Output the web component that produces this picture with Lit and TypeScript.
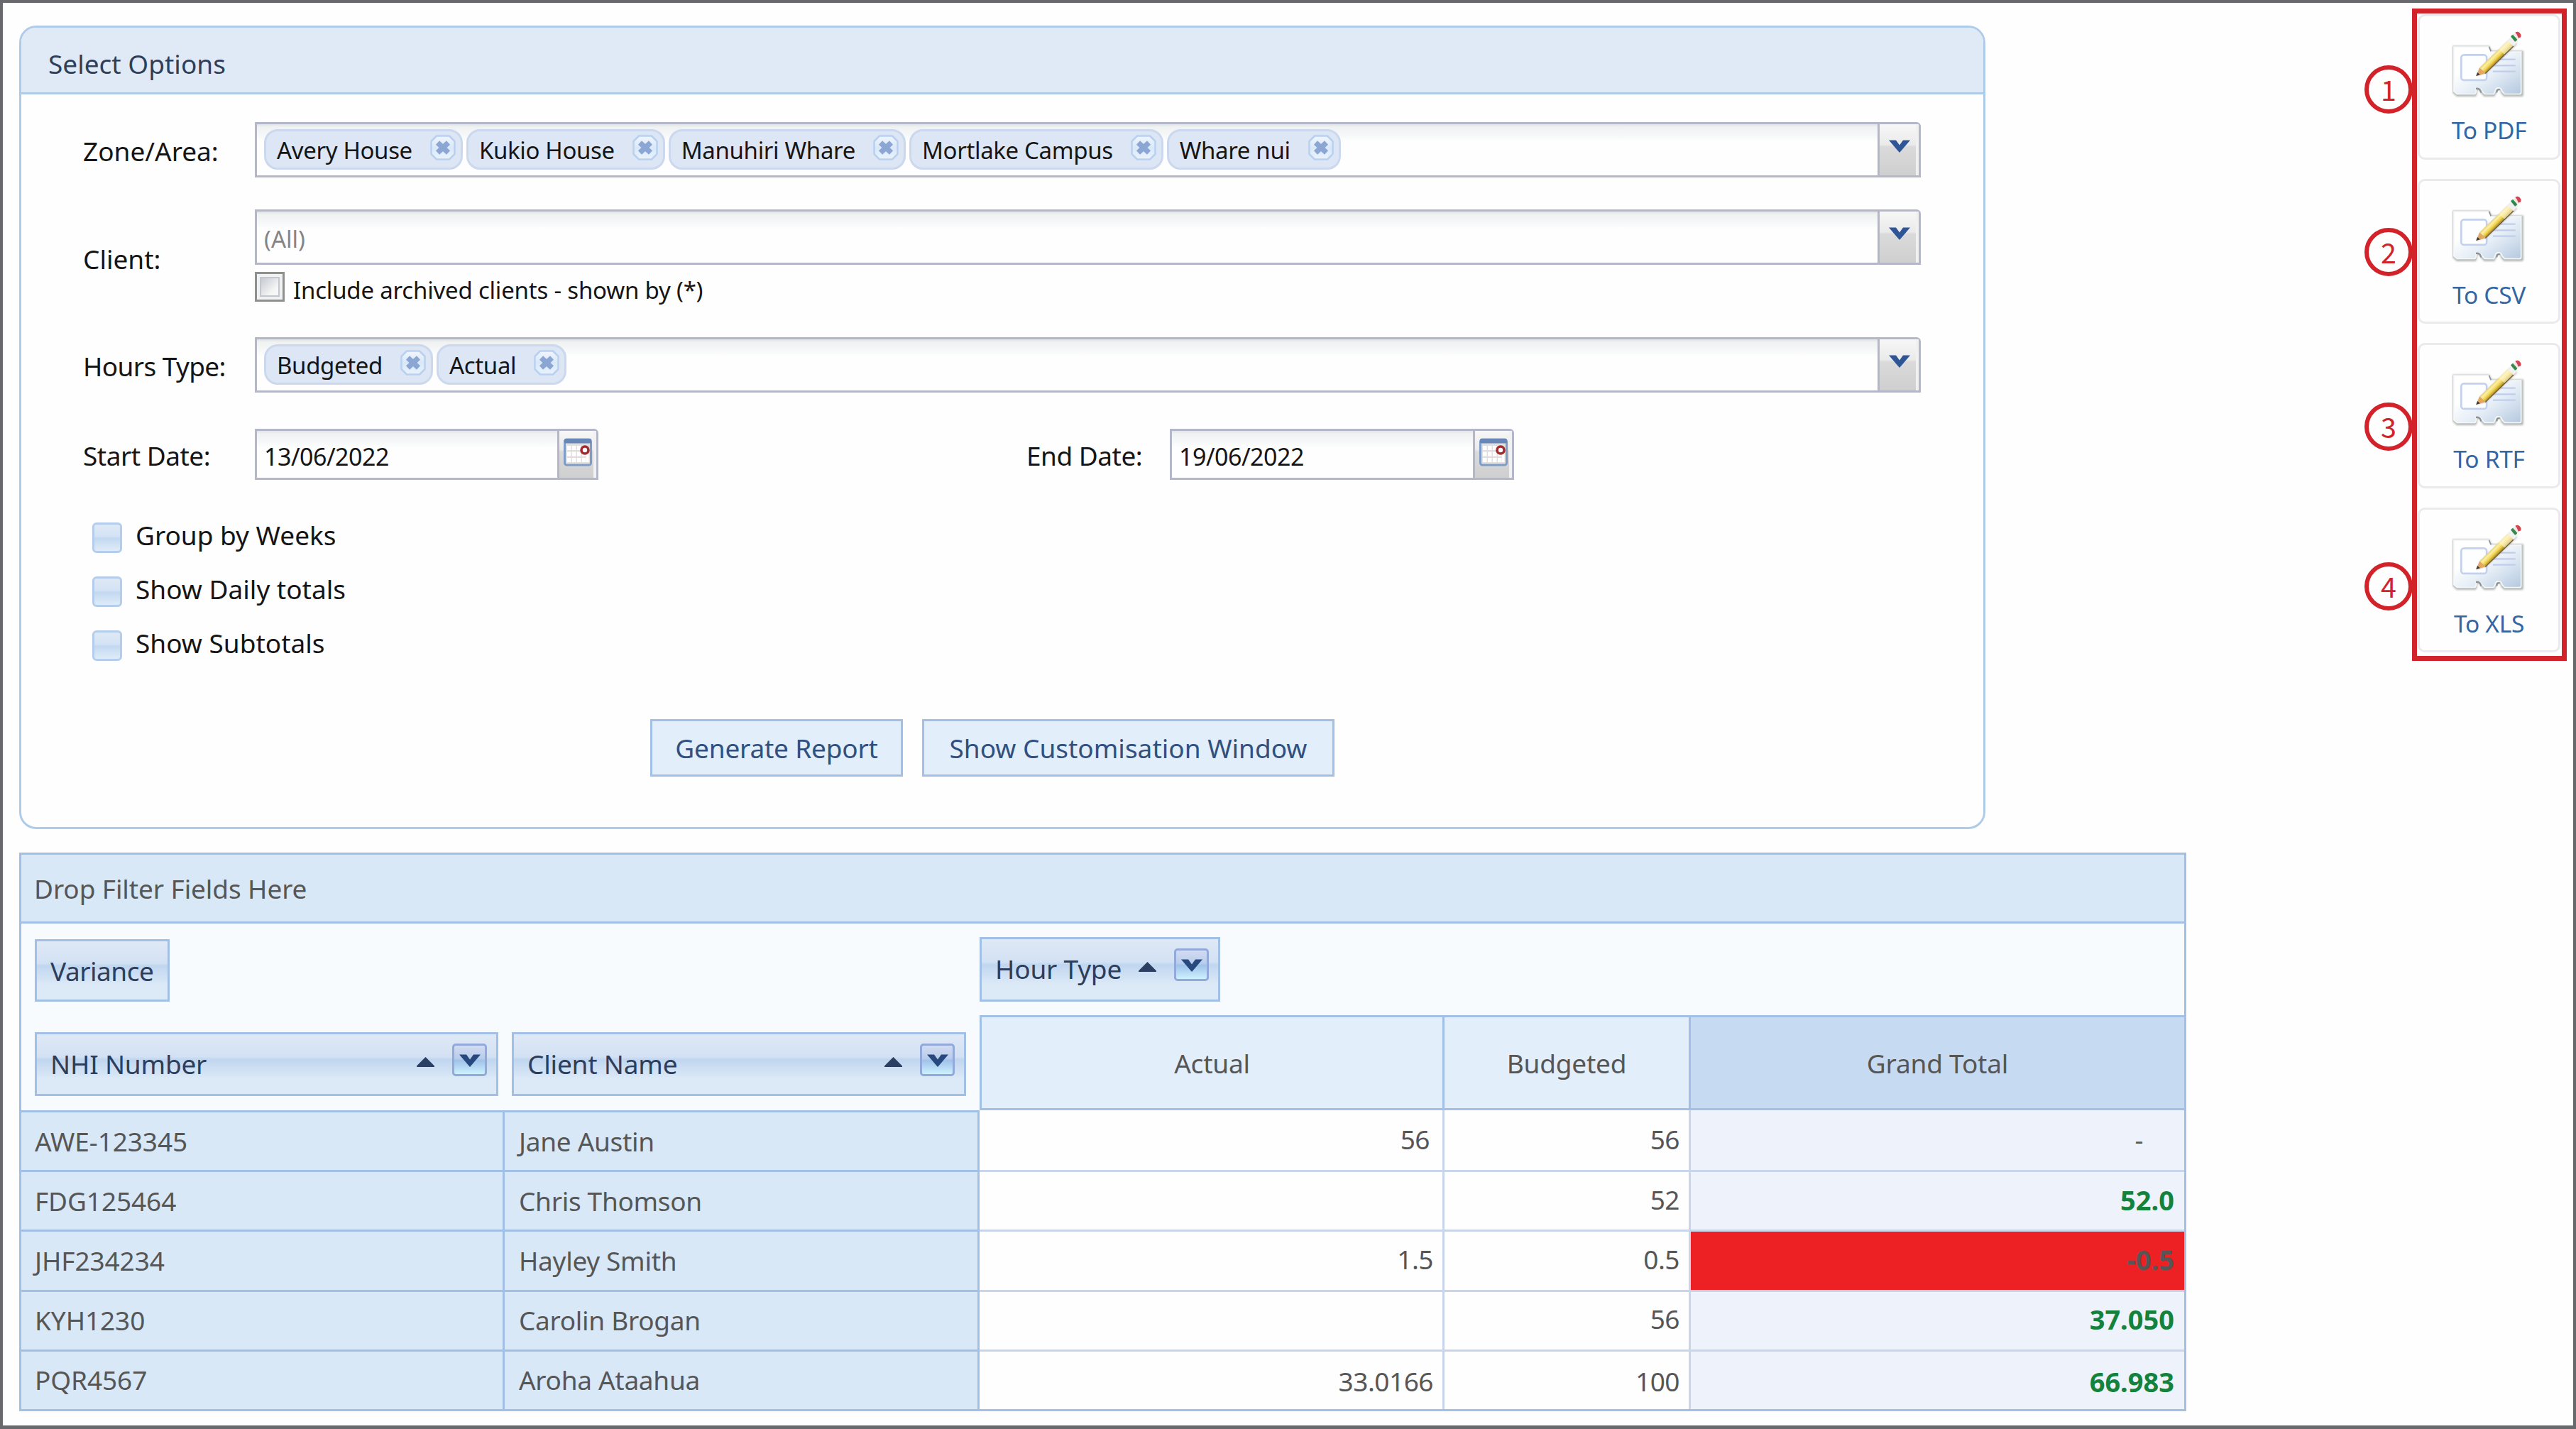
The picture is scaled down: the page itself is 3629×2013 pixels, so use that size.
import { LitElement, html, css, svg, nothing } from "lit";
import { customElement } from "lit/decorators.js";
import { classMap } from "lit/directives/class-map.js";

const chevron = html`<svg class="chev" viewBox="0 0 30 18" width="30" height="18">
  <path d="M0 0.5H10L15 7.5L20 0.5H30L18.5 14L15 18L11.5 14Z" fill="currentColor" />
</svg>`;

const closeIcon = html`<svg class="close" viewBox="0 0 36 36" width="36" height="36">
  <defs>
    <linearGradient id="cg" x1="0" y1="0" x2="0" y2="1">
      <stop offset="0" stop-color="#f1f6fd" /><stop offset="0.5" stop-color="#d9e8f8" />
      <stop offset="1" stop-color="#e9f3fc" />
    </linearGradient>
  </defs>
  <path d="M9 1.5H27L34.500 9V27L27 34.500H9L1.500 27V9Z" fill="url(#cg)" stroke="#b9d1ef" stroke-width="2.500" stroke-linejoin="round" />
  <path d="M10.500 11L25.500 25M25.500 11L10.500 25" stroke="#8ba6d3" stroke-width="7.500" />
</svg>`;

const calendarIcon = html`<svg class="cal" viewBox="0 0 40 40" width="40" height="40">
  <rect x="1.500" y="2" width="37" height="36" rx="3" fill="#e2e0de" stroke="#7d9cc8" stroke-width="3" />
  <rect x="1" y="1" width="38" height="6.500" rx="2" fill="#6787b8" />
  <g fill="#ffffff">
    ${[10, 18.5, 27].flatMap((y) => [5, 12, 19, 26].map((x) => svg`<rect x=${x} y=${y + 1} width="5.500" height="6" />`))}
    <rect x="32" y="19" width="3.500" height="15" />
  </g>
  <circle cx="30" cy="17" r="5" fill="#ffffff" stroke="#a32a2e" stroke-width="3.600" />
</svg>`;

const sortUp = html`<svg class="sort" viewBox="0 0 25 14" width="25" height="14">
  <path d="M12.500 0L25 12.500V14H0V12.500Z" fill="#2b3f63" />
</svg>`;

const cardIcon = html`<svg class="pic" viewBox="40 25 310 285" width="103" height="95">
  <defs>
    <linearGradient id="card" x1="0" y1="0" x2="1" y2="1">
      <stop offset="0.3" stop-color="#ffffff" /><stop offset="0.6" stop-color="#e4edf6" />
      <stop offset="1" stop-color="#b4c8df" />
    </linearGradient>
    <linearGradient id="wood" gradientUnits="userSpaceOnUse" x1="218" y1="124" x2="243" y2="149">
      <stop offset="0" stop-color="#e9d27c" /><stop offset="0.25" stop-color="#fdf0a4" />
      <stop offset="0.6" stop-color="#f0d14c" /><stop offset="1" stop-color="#9c7a22" />
    </linearGradient>
    <filter id="soft" x="-10%" y="-10%" width="120%" height="120%"><feGaussianBlur stdDeviation="3" /></filter>
  </defs>
  <path d="M46 92H198L208 112H342V296Q342 303 334 303H262L250 290Q248 274 238 274Q228 274 228 288L220 303H178L166 290Q160 272 144 276Q150 290 140 303H62L46 288Z"
    fill="#b4bab8" stroke="#c0c5c2" stroke-width="5" filter="url(#soft)" />
  <path d="M49 94H196L206 115H334V288Q334 294 326 294H264L253 282Q250 268 238 268Q225 268 224 282L218 294H180L168 282Q162 266 140 268Q148 282 138 294H62L49 282Z"
    fill="url(#card)" stroke="#f6f8f8" stroke-width="5" />
  <path d="M198 93L206 113" stroke="#8d9496" stroke-width="5" fill="none" />
  <path d="M142 271Q162 268 164 288" stroke="#8c9394" stroke-width="7" fill="none" />
  <path d="M231 288Q229 274 244 274" stroke="#8c9394" stroke-width="7" fill="none" />
  <rect x="80" y="128" width="108" height="107" rx="12" fill="#fdfeff" stroke="#c4d1ec" stroke-width="8" />
  <path d="M226 147H310M214 173H310M214 198H310" stroke="#c0cdeb" stroke-width="7" />
  <path d="M144 218L160 184L292 56L318 82L186 206Z" fill="#75706a" opacity="0.400" filter="url(#soft)" />
  <path d="M143 217L158 182L184 206Z" fill="#e2a862" />
  <path d="M143 217L149 202L160 212Z" fill="#3c3a3c" />
  <path d="M158 182L278 66L302 90L184 206Z" fill="url(#wood)" />
  <path d="M240 103L278 66L302 90L264 127Z" fill="#fdf6d8" opacity="0.600" />
  <path d="M182 207L302 91" stroke="#6b5c38" stroke-width="4" />
  <path d="M276 68L296 48L322 71L302 91Z" fill="#f1f1f1" />
  <path d="M290 50Q296 40 303 42L318 64Q316 68 308 72Z" fill="#2f8a4c" />
  <path d="M300 44L310 34L330 53L320 64Z" fill="#f5e6e7" />
  <path d="M309 33Q318 26 328 34Q338 44 331 54L322 56L316 42Z" fill="#d24450" />
</svg>`;

interface Row { nhi: string; name: string; actual: string; budgeted: string; total: string; tone?: string }

const ROWS: Row[] = [
  { nhi: "AWE-123345", name: "Jane Austin", actual: "56", budgeted: "56", total: "-", tone: "dash" },
  { nhi: "FDG125464", name: "Chris Thomson", actual: "", budgeted: "52", total: "52.0", tone: "good" },
  { nhi: "JHF234234", name: "Hayley Smith", actual: "1.5", budgeted: "0.5", total: "-0.5", tone: "bad" },
  { nhi: "KYH1230", name: "Carolin Brogan", actual: "", budgeted: "56", total: "37.050", tone: "good" },
  { nhi: "PQR4567", name: "Aroha Ataahua", actual: "33.0166", budgeted: "100", total: "66.983", tone: "good" },
];

const ZONES = ["Avery House", "Kukio House", "Manuhiri Whare", "Mortlake Campus", "Whare nui"];
const HOURS = ["Budgeted", "Actual"];
const CHECKS = ["Group by Weeks", "Show Daily totals", "Show Subtotals"];
const EXPORTS = ["To PDF", "To CSV", "To RTF", "To XLS"];

@customElement("app-root")
export class AppRoot extends LitElement {
  static styles = css`
    :host { display: block; }
    * { box-sizing: border-box; }
    svg { display: block; flex: none; }
    .page {
      display: flex; justify-content: space-between; align-items: flex-start;
      width: 3629px; height: 2013px; overflow: hidden; background: #fefefe;
      border: 4px solid #68696d; border-bottom-width: 5px;
      font-family: "Noto Sans", "Open Sans", sans-serif; font-size: 37px; line-height: 50px; color: #151515;
      white-space: nowrap;
    }
    .main { padding: 32px 0 0 23px; display: flex; flex-direction: column; gap: 33px; }

    .panel { width: 2770px; height: 1132px; border: 3px solid #aecbea; border-radius: 24px; overflow: hidden; }
    .panel-head { height: 94px; padding: 10px 0 0 38px; display: flex; align-items: center;
      background: #e0eaf6; border-bottom: 3px solid #aecbea; color: #2f3f5a; }
    .form { padding: 39px 88px 0 88px; display: flex; flex-direction: column; }
    .field { display: grid; grid-template-columns: 241px 1fr; align-items: center; }
    .field + .field { margin-top: 45px; }
    .field.hours { margin-top: 50px; }
    .field.dates { margin-top: 51px; grid-template-columns: 241px 484px 805px 485px; }
    .label { padding-top: 3px; margin-left: -1px; }
    .client .label { padding-top: 10px; }
    .hours .label { letter-spacing: -0.6px; }
    .dates .label { letter-spacing: -0.5px; }
    .label.end { padding-left: 604px; }

    .combo { display: flex; height: 78px; border: 3px solid #b4b6ca; border-top-right-radius: 6px; background: #fefefe; font-size: 33px; }
    .value { flex: 1; display: flex; align-items: center; padding-left: 10px; gap: 5px;
      background: linear-gradient(#dfe4e6 0, #f0f2f2 4px, #f6f8f9 16px, #fefefe 24px); }
    .combo .value.all { padding: 5px 0 0 10px; color: #858585; }
    .drop { width: 58px; display: flex; justify-content: center; align-items: flex-start; padding-top: 22px; border-left: 3px solid #b4b6ca; color: #2f5597;
      background: linear-gradient(#f7f7f7, #eaeaea 40%, #dadada 44%, #cfcfcf); box-shadow: inset -4px 0 0 #f1f0f3; }
    .chip { display: flex; align-items: center; height: 57px; border: 3px solid #cbd8ee; border-radius: 19px; background: #dde6f5;
      padding: 0 7px 0 15px; gap: 25px; margin-bottom: 2px; letter-spacing: -0.35px; }
    .chip span { padding-top: 4px; }
    .close { margin-top: -4px; }
    .date { height: 72px; font-size: 34px; letter-spacing: -0.5px; }
    .date .value { padding-top: 5px; }
    .date .drop { width: 55px; padding-top: 10px; }

    .archived { display: flex; align-items: center; gap: 12px; height: 42px; margin-top: 10px; font-size: 33px; letter-spacing: -0.2px; }
    .archived span { padding-top: 10px; }
    .box { width: 42px; height: 42px; border: 3px solid #8e8f8f; padding: 4px; background: #f1f1f1; }
    .box i { display: block; height: 100%; border: 2px solid #c3c7cf; background: linear-gradient(135deg, #c6cad1, #f7f7f7 75%); }

    .checks { display: flex; flex-direction: column; gap: 33px; padding: 60px 0 0 12px; }
    .check { display: flex; align-items: center; height: 43px; gap: 19px; }
    .check span { margin-top: -7px; }
    .tick { width: 42px; height: 43px; border: 3px solid #b4cdec; border-radius: 6px;
      background: linear-gradient(#dfe9f6, #d3e2f4 45%, #c2d8f0 52%, #dfecf8); }
    .buttons { display: flex; gap: 27px; padding: 82px 0 0 798px; }
    .btn { width: 356px; height: 81px; border: 3px solid #a2bfe5; background: #e2eefa; color: #31507f; display: flex; align-items: center; justify-content: center;
      padding-top: 1px; letter-spacing: -0.2px; }
    .btn.wide { width: 581px; letter-spacing: 0; }

    .pivot { width: 3053px; height: 787px; border: 3px solid #a2bfe5; background: #f7fbfe; color: #565656; }
    .filter { height: 97px; border-bottom: 3px solid #a2bfe5; background: #d8e8f6; display: flex; align-items: center; padding: 2px 0 0 18px; letter-spacing: -0.1px; }
    .head { display: flex; height: 266px; }
    .head-left { width: 1350px; border-bottom: 3px solid #a2bfe5; padding: 22px 0 0 19px; display: flex; flex-direction: column; align-items: flex-start; gap: 43px; }
    .fields { display: flex; gap: 19px; }
    .pf { display: flex; align-items: flex-start; height: 90px; border: 3px solid #a2bfe5; color: #2c3e5c; padding: 17px 0 0 19px; letter-spacing: -0.2px;
      background: linear-gradient(#dfe9f6, #d2e1f3 38%, #c0d6ef 42%, #d4e4f5 66%, #dce9f7 74%); }
    .pf.variance { height: 88px; width: 190px; letter-spacing: -0.5px; }
    .pf.nhi { width: 653px; }
    .pf.cname { width: 640px; }
    .pf.hour { width: 339px; height: 91px; }
    .pf .sort { margin: 15px 25px 0 auto; }
    .dd { width: 49px; height: 46px; margin: -4px 13px 0 0; border: 3px solid #93a9d9; border-radius: 5px; display: flex; justify-content: center; align-items: center;
      background: linear-gradient(#d2dbf1, #b9cdec 45%, #9fc2ea 52%, #cdf2fd); padding-top: 2px; color: #27497d; }
    .head-right { flex: 1; padding-top: 19px; }
    .cols { display: grid; grid-template-columns: 655px 347px 1fr; height: 134px; margin-top: 19px; border: 3px solid #a2bfe5; border-right: 0; border-left-width: 0; letter-spacing: -0.2px; }
    .cols div { display: flex; align-items: center; justify-content: center; background: #e2eefa; border-right: 3px solid #a2bfe5; padding-top: 1px; }
    .cols div:first-child { border-left: 3px solid #a2bfe5; }
    .cols div.grand { background: #c6daf1; border-right: 0; }

    .row { display: grid; grid-template-columns: 681px 669px 655px 347px 1fr; height: 84.2px; }
    .row div { border-bottom: 3px solid #c9d5ea; border-right: 3px solid #c9d5ea; display: flex; align-items: center; }
    .row .rh { background: #d8e8f6; border-color: #a2bfe5; padding-left: 19px; letter-spacing: -0.1px; }
    .row .rh.name { letter-spacing: -0.3px; padding-left: 20px; }
    .row:last-child { height: 81.2px; }
    .row:last-child div { border-bottom: 0; }
    .num { justify-content: flex-end; background: #fefefe; padding: 0 13px 4px 0; letter-spacing: -0.5px; }
    .num.first { padding-right: 18px; }
    .row:first-child .num { margin-top: -3px; padding-bottom: 2px; }
    .row div.total { background: #eef3fb; border-right: 0; padding-right: 14px; }
    .row div.total.good, .row div.total.bad { color: #13823c; font-weight: 700; font-size: 38px; letter-spacing: 0; }
    .row div.total.bad { background: #ed2024; color: #565656; }
    .row div.total.dash { padding-right: 58px; }
    .row:last-child .num { padding-bottom: 0; padding-top: 3px; }

    .exports { position: relative; width: 218px; height: 919px; margin: 8px 9px 0 0; border: 7px solid #d2232a; padding: 1px 2px 0 1px;
      display: flex; flex-direction: column; gap: 27px; }
    .card { height: 204.5px; flex: none; border: 3px solid #ebe9eb; border-radius: 10px; padding-top: 20px; display: flex; flex-direction: column; align-items: center;
      gap: 20px; color: #3366a2; font-size: 33.5px; letter-spacing: -0.3px; }
    .card .pic { margin-left: -2px; }
    .mark { position: absolute; left: -74px; width: 68px; height: 68px; border: 6px solid #d2232a; border-radius: 50%; color: #d2232a;
      font: 39.500px/54px "Noto Sans CJK SC", sans-serif; text-align: center; }
    .m0 { top: 73px; } .m1 { top: 302px; } .m2 { top: 548px; } .m3 { top: 773px; }
  `;

  private chips(items: string[]) {
    return html`<div class="combo"><div class="value">${items.map((t) => html`<div class="chip"><span>${t}</span>${closeIcon}</div>`)}</div><div class="drop">${chevron}</div></div>`;
  }

  private date(value: string) {
    return html`<div class="combo date"><div class="value"><span>${value}</span></div><div class="drop">${calendarIcon}</div></div>`;
  }

  private pivotField(name: string, kind: string, tools = true) {
    return html`<div class="pf ${kind}"><span>${name}</span>${tools ? html`${sortUp}<div class="dd">${chevron}</div>` : nothing}</div>`;
  }

  render() {
    return html`<div class="page">
      <div class="main">
        <section class="panel">
          <header class="panel-head"><span>Select Options</span></header>
          <div class="form">
            <div class="field"><div class="label">Zone/Area:</div>${this.chips(ZONES)}</div>
            <div class="field client">
              <div class="label">Client:</div>
              <div>
                <div class="combo"><div class="value all">(All)</div><div class="drop">${chevron}</div></div>
                <div class="archived"><div class="box"><i></i></div><span>Include archived clients - shown by (*)</span></div>
              </div>
            </div>
            <div class="field hours"><div class="label">Hours Type:</div>${this.chips(HOURS)}</div>
            <div class="field dates">
              <div class="label">Start Date:</div>${this.date("13/06/2022")}
              <div class="label end">End Date:</div>${this.date("19/06/2022")}
            </div>
            <div class="checks">${CHECKS.map((c) => html`<div class="check"><div class="tick"></div><span>${c}</span></div>`)}</div>
            <div class="buttons"><div class="btn">Generate Report</div><div class="btn wide">Show Customisation Window</div></div>
          </div>
        </section>
        <section class="pivot">
          <div class="filter">Drop Filter Fields Here</div>
          <div class="head">
            <div class="head-left">
              ${this.pivotField("Variance", "variance", false)}
              <div class="fields">${this.pivotField("NHI Number", "nhi")}${this.pivotField("Client Name", "cname")}</div>
            </div>
            <div class="head-right">
              ${this.pivotField("Hour Type", "hour")}
              <div class="cols"><div>Actual</div><div>Budgeted</div><div class="grand">Grand Total</div></div>
            </div>
          </div>
          <div class="rows">
            ${ROWS.map((r, i) => html`<div class="row">
              <div class="rh">${r.nhi}</div><div class="rh name">${r.name}</div>
              <div class=${classMap({ num: true, first: i === 0 })}>${r.actual}</div>
              <div class="num">${r.budgeted}</div>
              <div class="num total ${r.tone ?? ""}">${r.total}</div>
            </div>`)}
          </div>
        </section>
      </div>
      <aside class="exports">
        ${EXPORTS.map((e) => html`<div class="card">${cardIcon}<span>${e}</span></div>`)}
        ${EXPORTS.map((_, i) => html`<div class="mark m${i}">${i + 1}</div>`)}
      </aside>
    </div>`;
  }
}
